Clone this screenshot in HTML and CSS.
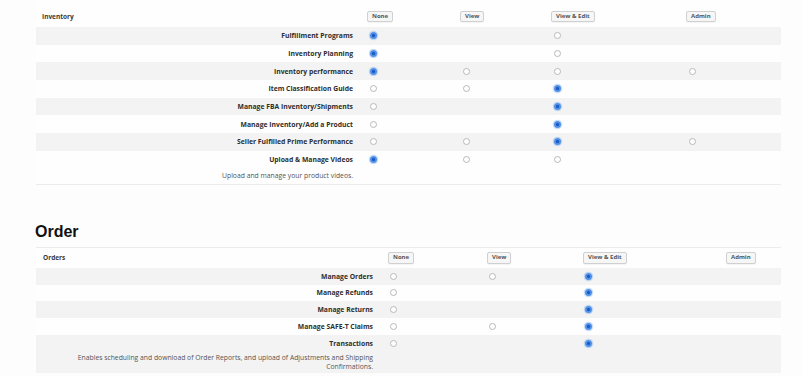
FILE: index.html
```html
<!DOCTYPE html>
<html lang="en">
<head>
    <meta charset="UTF-8">
    <meta name="viewport" content="width=device-width, initial-scale=1.0">
    <title>User Permissions</title>
    <link rel="stylesheet" href="styles.css">
</head>
<body>
<div class="page">

    <section class="perm-group inventory">
        <div class="perm-head">
            <div class="group-name">Inventory</div>
            <div class="opt"><button>None</button></div>
            <div class="opt"><button>View</button></div>
            <div class="opt"><button>View &amp; Edit</button></div>
            <div class="opt"><button>Admin</button></div>
        </div>

        <div class="perm-row">
            <div class="perm-label"><div class="perm-name">Fulfillment Programs</div></div>
            <div class="opt"><input type="radio" name="inv1" checked></div>
            <div class="opt"></div>
            <div class="opt"><input type="radio" name="inv1"></div>
            <div class="opt"></div>
        </div>
        <div class="perm-row">
            <div class="perm-label"><div class="perm-name">Inventory Planning</div></div>
            <div class="opt"><input type="radio" name="inv2" checked></div>
            <div class="opt"></div>
            <div class="opt"><input type="radio" name="inv2"></div>
            <div class="opt"></div>
        </div>
        <div class="perm-row">
            <div class="perm-label"><div class="perm-name">Inventory performance</div></div>
            <div class="opt"><input type="radio" name="inv3" checked></div>
            <div class="opt"><input type="radio" name="inv3"></div>
            <div class="opt"><input type="radio" name="inv3"></div>
            <div class="opt"><input type="radio" name="inv3"></div>
        </div>
        <div class="perm-row">
            <div class="perm-label"><div class="perm-name">Item Classification Guide</div></div>
            <div class="opt"><input type="radio" name="inv4"></div>
            <div class="opt"><input type="radio" name="inv4"></div>
            <div class="opt"><input type="radio" name="inv4" checked></div>
            <div class="opt"></div>
        </div>
        <div class="perm-row">
            <div class="perm-label"><div class="perm-name">Manage FBA Inventory/Shipments</div></div>
            <div class="opt"><input type="radio" name="inv5"></div>
            <div class="opt"></div>
            <div class="opt"><input type="radio" name="inv5" checked></div>
            <div class="opt"></div>
        </div>
        <div class="perm-row">
            <div class="perm-label"><div class="perm-name">Manage Inventory/Add a Product</div></div>
            <div class="opt"><input type="radio" name="inv6"></div>
            <div class="opt"></div>
            <div class="opt"><input type="radio" name="inv6" checked></div>
            <div class="opt"></div>
        </div>
        <div class="perm-row">
            <div class="perm-label"><div class="perm-name">Seller Fulfilled Prime Performance</div></div>
            <div class="opt"><input type="radio" name="inv7"></div>
            <div class="opt"><input type="radio" name="inv7"></div>
            <div class="opt"><input type="radio" name="inv7" checked></div>
            <div class="opt"><input type="radio" name="inv7"></div>
        </div>
        <div class="perm-row">
            <div class="perm-label">
                <div class="perm-name">Upload &amp; Manage Videos</div>
                <div class="perm-desc">Upload and manage your product videos.</div>
            </div>
            <div class="opt"><input type="radio" name="inv8" checked></div>
            <div class="opt"><input type="radio" name="inv8"></div>
            <div class="opt"><input type="radio" name="inv8"></div>
            <div class="opt"></div>
        </div>
    </section>

    <h2 class="section-title">Order</h2>

    <section class="perm-group orders">
        <div class="perm-head">
            <div class="group-name">Orders</div>
            <div class="opt"><button>None</button></div>
            <div class="opt"><button>View</button></div>
            <div class="opt"><button>View &amp; Edit</button></div>
            <div class="opt"><button>Admin</button></div>
        </div>

        <div class="perm-row">
            <div class="perm-label"><div class="perm-name">Manage Orders</div></div>
            <div class="opt"><input type="radio" name="ord1"></div>
            <div class="opt"><input type="radio" name="ord1"></div>
            <div class="opt"><input type="radio" name="ord1" checked></div>
            <div class="opt"></div>
        </div>
        <div class="perm-row">
            <div class="perm-label"><div class="perm-name">Manage Refunds</div></div>
            <div class="opt"><input type="radio" name="ord2"></div>
            <div class="opt"></div>
            <div class="opt"><input type="radio" name="ord2" checked></div>
            <div class="opt"></div>
        </div>
        <div class="perm-row">
            <div class="perm-label"><div class="perm-name">Manage Returns</div></div>
            <div class="opt"><input type="radio" name="ord3"></div>
            <div class="opt"></div>
            <div class="opt"><input type="radio" name="ord3" checked></div>
            <div class="opt"></div>
        </div>
        <div class="perm-row">
            <div class="perm-label"><div class="perm-name">Manage SAFE-T Claims</div></div>
            <div class="opt"><input type="radio" name="ord4"></div>
            <div class="opt"><input type="radio" name="ord4"></div>
            <div class="opt"><input type="radio" name="ord4" checked></div>
            <div class="opt"></div>
        </div>
        <div class="perm-row">
            <div class="perm-label">
                <div class="perm-name">Transactions</div>
                <div class="perm-desc">Enables scheduling and download of Order Reports, and upload of Adjustments and Shipping Confirmations.</div>
            </div>
            <div class="opt"><input type="radio" name="ord5"></div>
            <div class="opt"></div>
            <div class="opt"><input type="radio" name="ord5" checked></div>
            <div class="opt"></div>
        </div>
    </section>

</div>
</body>
</html>
```

FILE: styles.css
```css
body {
    margin: 0;
    background: #fdfdfd;
    font-family: 'Open Sans', 'Liberation Sans', sans-serif;
    color: #333;
}
.page {
    padding: 0 21px 0 36px;
}

/* permission tables */
.perm-head,
.perm-row {
    display: grid;
    align-items: start;
}
.inventory .perm-head,
.inventory .perm-row {
    grid-template-columns: 330px 93px 91px 135px 1fr;
}
.orders .perm-head,
.orders .perm-row {
    grid-template-columns: 351px 99px 96px 143px 1fr;
}
.perm-head {
    background: #fefefe;
    align-items: center;
}
.inventory .perm-head {
    height: 21px;
    padding-top: 6px;
}
.orders .perm-head {
    height: 20px;
}
.perm-row {
    background: #fefefe;
}
.perm-row:nth-child(even) {
    background: #f3f3f3;
}
.inventory {
    border-bottom: 1px solid #ececec;
}
.orders {
    border-top: 1px solid #ececec;
}

.group-name {
    font-size: 6.5px;
    font-weight: 700;
    color: #3a3a3a;
    padding-left: 6px;
}
.orders .group-name {
    padding-left: 7px;
}

.perm-name {
    display: flex;
    align-items: center;
    justify-content: flex-end;
    font-size: 6.8px;
    font-weight: 700;
    color: #2e2e2e;
}
.perm-desc {
    text-align: right;
    font-size: 6.8px;
    color: #555;
    padding-left: 40px;
}
.inventory .perm-name {
    height: 17.7px;
    padding-right: 13px;
}
.inventory .perm-desc {
    line-height: 10px;
    padding: 2px 13px 3.3px 40px;
}
.orders .perm-name {
    height: 16.8px;
    padding-right: 14px;
}
.orders .perm-desc {
    line-height: 9px;
    padding: 1.5px 14px 2px 40px;
}

.opt {
    display: flex;
    align-items: center;
    padding-left: 3.5px;
}
.inventory .perm-row .opt {
    height: 17.7px;
}
.orders .perm-row .opt {
    height: 16.8px;
    padding-left: 3px;
}
.perm-head .opt {
    padding-left: 1px;
}

button {
    font-family: inherit;
    font-size: 6px;
    font-weight: 700;
    color: #555;
    background: #f6f6f6;
    border: 1px solid #d0d0d0;
    border-radius: 2px;
    height: 11px;
    line-height: 9px;
    padding: 0 4px;
    margin: 0;
    box-shadow: 0 1px 0 rgba(0, 0, 0, 0.04);
}
.orders button {
    height: 12px;
}

input[type="radio"] {
    appearance: none;
    -webkit-appearance: none;
    width: 7px;
    height: 7px;
    margin: 0;
    border: 1px solid #b8b8b8;
    border-radius: 50%;
    background: #fff;
}
input[type="radio"]:checked {
    border: none;
    background: radial-gradient(circle, #1c58bd 0 1.2px, #4b8fe8 1.8px);
    box-shadow: 0 0 0 1.3px rgba(86, 150, 235, 0.3);
}

.section-title {
    font-family: 'Liberation Sans', Arial, sans-serif;
    font-size: 16px;
    font-weight: 700;
    line-height: 19px;
    color: #111;
    margin: 37px 0 6px -1px;
}
```
